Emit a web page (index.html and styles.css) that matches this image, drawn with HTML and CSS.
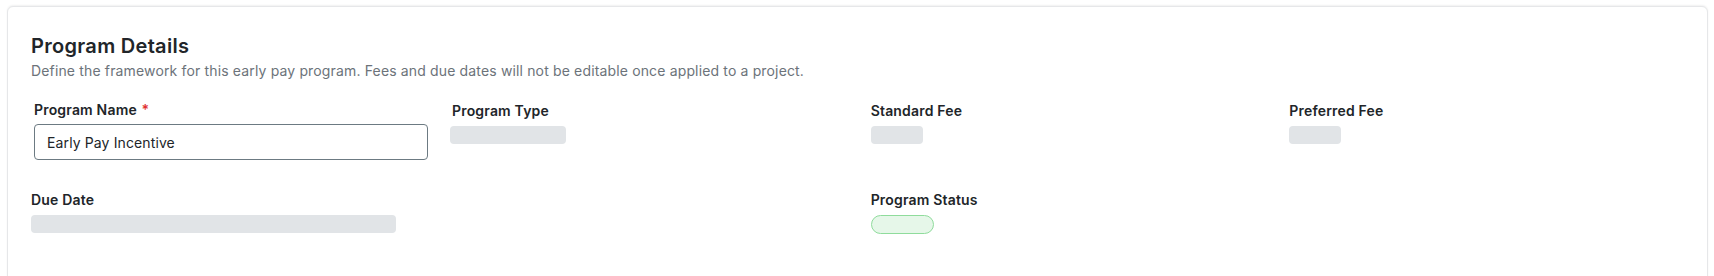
FILE: index.html
```html
<!DOCTYPE html>
<html lang="en">
<head>
<meta charset="utf-8">
<title>Program Details</title>
<link rel="stylesheet" href="styles.css">
</head>
<body>
<div class="page">
  <section class="card">
    <h2 class="title">Program Details</h2>
    <p class="subtitle">Define the framework for this early pay program. Fees and due dates will not be editable once applied to a project.</p>
    <div class="grid">
      <div class="field field-edit">
        <label class="label" for="pname">Program Name <span class="req">*</span></label>
        <input id="pname" class="input" type="text" value="Early Pay Incentive">
      </div>
      <div class="field field-ro">
        <div class="label">Program Type</div>
        <div class="skel skel-type"></div>
      </div>
      <div class="field field-ro">
        <div class="label">Standard Fee</div>
        <div class="skel skel-fee"></div>
      </div>
      <div class="field field-ro">
        <div class="label">Preferred Fee</div>
        <div class="skel skel-fee"></div>
      </div>
      <div class="field field-ro span-2">
        <div class="label">Due Date</div>
        <div class="skel skel-date"></div>
      </div>
      <div class="field field-ro">
        <div class="label">Program Status</div>
        <div class="pill"></div>
      </div>
    </div>
  </section>
</div>
</body>
</html>
```
FILE: styles.css
```css
* { box-sizing: border-box; }
html, body { margin: 0; padding: 0; background: #ffffff; }
body {
  font-family: Inter, "Noto Sans", "Liberation Sans", sans-serif;
  color: #212529;
}
.page {
  padding: 6px 6px 0 7px;
}
.card {
  border: 1px solid #e6e7e9;
  border-radius: 6px;
  box-shadow: 0 -1px 2px rgba(0, 0, 0, 0.06);
  background: #fff;
  padding: 25px 23px 32px 23px;
  min-height: 280px;
}
.title {
  margin: 0;
  font-size: 20px;
  line-height: 28px;
  font-weight: 600;
  letter-spacing: 0.3px;
  color: #212529;
}
.subtitle {
  margin: 1px 0 0;
  font-size: 14px;
  line-height: 20px;
  letter-spacing: 0.15px;
  color: #6c737a;
}
.grid {
  margin-top: 19px;
  display: grid;
  grid-template-columns: repeat(4, 1fr);
  column-gap: 24px;
  row-gap: 29px;
  align-items: start;
}
.span-2 { grid-column: span 2; }
.field { display: flex; flex-direction: column; align-items: flex-start; }
.field-ro { padding-top: 1px; }
.field-edit { margin-left: 3px; }
.label {
  font-size: 14px;
  line-height: 20px;
  font-weight: 600;
  letter-spacing: 0.18px;
  color: #212529;
}
.field-ro .label { margin-bottom: 5px; }
.field-edit .label { margin-bottom: 4px; }
.req { color: #e03131; margin-left: 1px; }
.input {
  width: 394px;
  height: 36px;
  border: 1px solid #6c7a82;
  border-radius: 4px;
  padding: 0 12px;
  font-family: inherit;
  font-size: 14px;
  letter-spacing: 0.12px;
  color: #212529;
  background: #fff;
  outline: none;
}
.skel {
  height: 18px;
  background: #e1e4e7;
  border-radius: 4px;
}
.skel-type { width: 116px; margin-left: -2px; }
.skel-fee { width: 52px; }
.skel-date { width: 365px; }
.pill {
  width: 63px;
  height: 19px;
  border-radius: 10px;
  background: #e6f7e9;
  border: 1px solid #8fdc9c;
}
```
